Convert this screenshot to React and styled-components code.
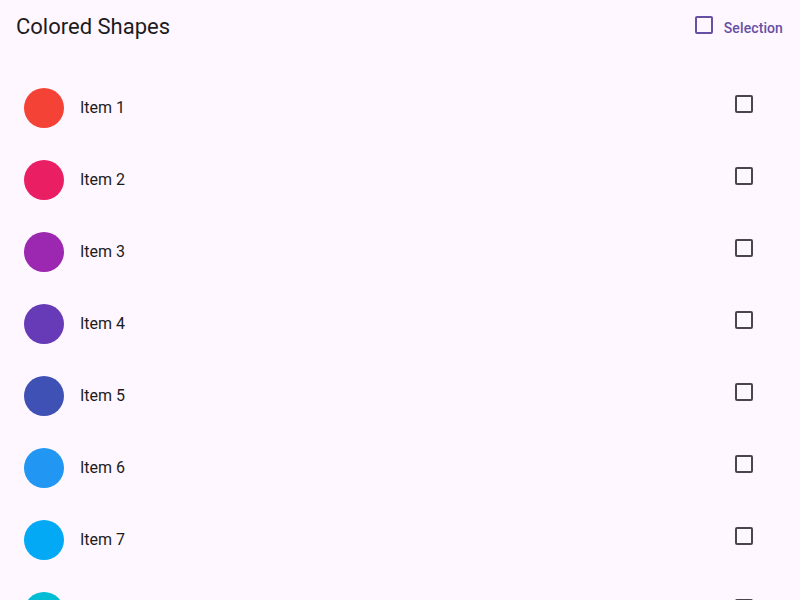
import styled, { createGlobalStyle } from "styled-components";

const Global = createGlobalStyle`
  html, body {
    margin: 0;
    padding: 0;
    background: #fef7ff;
    font-family: Roboto, "Noto Sans", sans-serif;
    color: #1d1b20;
  }
  #root {
    height: 600px;
    overflow: hidden;
  }
`;

const Page = styled.div`
  width: 800px;
  height: 600px;
  overflow: hidden;
  background: #fef7ff;
`;

const Header = styled.header`
  display: flex;
  align-items: flex-start;
  justify-content: space-between;
  height: 56px;
  padding: 16px 17px 0 16px;
  box-sizing: border-box;
`;

const Title = styled.h1`
  margin: 0;
  font-size: 22px;
  line-height: 22px;
  font-weight: 400;
  color: #1d1b20;
`;

const SelectButton = styled.button`
  display: flex;
  align-items: flex-start;
  gap: 11px;
  padding: 0;
  border: none;
  background: transparent;
  color: #6750a4;
  font-family: inherit;
  font-size: 14px;
  font-weight: 500;
  letter-spacing: 0.1px;
  line-height: 14px;
  cursor: pointer;
`;

const Box = styled.span`
  display: inline-block;
  width: 18px;
  height: 18px;
  box-sizing: border-box;
  border: 2px solid ${(p) => p.$color};
  border-radius: 2px;
  flex-shrink: 0;
`;

const ButtonLabel = styled.span`
  margin-top: 5px;
`;

const List = styled.ul`
  list-style: none;
  margin: 0;
  padding: 16px 0 0;
`;

const Row = styled.li`
  display: flex;
  align-items: center;
  height: 72px;
  padding: 0 47px 0 24px;
  box-sizing: border-box;
`;

const Avatar = styled.span`
  width: 40px;
  height: 40px;
  border-radius: 50%;
  background: ${(p) => p.$color};
  flex-shrink: 0;
`;

const Label = styled.span`
  flex: 1;
  margin-left: 16px;
  font-size: 16px;
  line-height: 16px;
  color: #1d1b20;
`;

const Trailing = styled.span`
  display: flex;
  margin-bottom: 8px;
`;

const colors = [
  "#f44336",
  "#e91e63",
  "#9c27b0",
  "#673ab7",
  "#3f51b5",
  "#2196f3",
  "#03a9f4",
  "#00bcd4",
  "#009688",
];

export default function App() {
  return (
    <Page>
      <Global />
      <Header>
        <Title>Colored Shapes</Title>
        <SelectButton>
          <Box $color="#6750a4" />
          <ButtonLabel>Selection</ButtonLabel>
        </SelectButton>
      </Header>
      <List>
        {colors.map((c, i) => (
          <Row key={c}>
            <Avatar $color={c} />
            <Label>Item {i + 1}</Label>
            <Trailing>
              <Box $color="#49454f" />
            </Trailing>
          </Row>
        ))}
      </List>
    </Page>
  );
}
